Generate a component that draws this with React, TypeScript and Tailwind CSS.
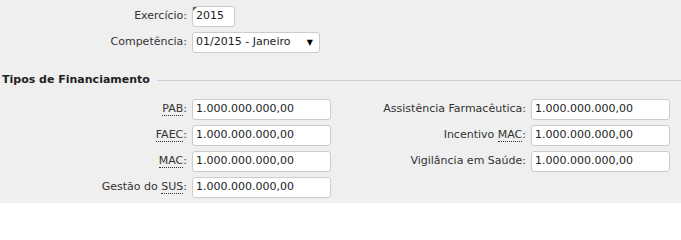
import React from "react";

const Abbr = ({ children }: { children: React.ReactNode }) => (
  <abbr className="no-underline border-b border-dotted border-[#333] leading-[12px]" style={{ textDecoration: "none" }}>
    {children}
  </abbr>
);

const Input = ({ value, w = "w-[139px]" }: { value: string; w?: string }) => (
  <div className={`${w} h-[21px] bg-white border border-[#cccccc] rounded-[3px] flex items-center pl-[3px] text-[#222]`}>
    {value}
  </div>
);

const Label = ({ children }: { children: React.ReactNode }) => (
  <div className="flex items-center justify-end h-[21px] whitespace-nowrap">{children}</div>
);

export default function App() {
  const v = "1.000.000.000,00";
  return (
    <div
      className="w-[681px] h-[203px] bg-[#efefef] text-[#333] text-[11px] overflow-hidden"
      style={{ fontFamily: '"DejaVu Sans", Verdana, sans-serif' }}
    >
      <div className="grid grid-cols-[187px_auto] gap-x-[5px] gap-y-[5px] pt-[6px]">
        <Label>Exercício:</Label>
        <div className="relative w-[43px]">
          <Input value="2015" w="w-[43px]" />
          <div className="absolute left-[1px] top-[1px] w-0 h-0 border-t-[4px] border-t-[#666] border-r-[4px] border-r-transparent" />
        </div>
        <Label>Competência:</Label>
        <div className="w-[128px] h-[21px] bg-white border border-[#cccccc] rounded-[3px] flex items-center justify-between pl-[3px] pr-[6px] text-[#222]">
          <span>01/2015 - Janeiro</span>
          <span className="text-[8px] text-black">▼</span>
        </div>
      </div>
      <div className="flex items-center mt-[19px] pl-[2px]">
        <span className="font-bold text-[#222] whitespace-nowrap">Tipos de Financiamento</span>
        <div className="flex-1 h-px bg-[#cfcfcf] ml-[7px]" />
      </div>
      <div className="grid grid-cols-[187px_139px_190px_139px] gap-x-[5px] gap-y-[5px] mt-[10px]">
        <Label><Abbr>PAB</Abbr>:</Label>
        <Input value={v} />
        <Label>Assistência Farmacêutica:</Label>
        <Input value={v} />

        <Label><Abbr>FAEC</Abbr>:</Label>
        <Input value={v} />
        <Label>Incentivo&nbsp;<Abbr>MAC</Abbr>:</Label>
        <Input value={v} />

        <Label><Abbr>MAC</Abbr>:</Label>
        <Input value={v} />
        <Label>Vigilância em Saúde:</Label>
        <Input value={v} />

        <Label>Gestão do&nbsp;<Abbr>SUS</Abbr>:</Label>
        <Input value={v} />
      </div>
    </div>
  );
}
